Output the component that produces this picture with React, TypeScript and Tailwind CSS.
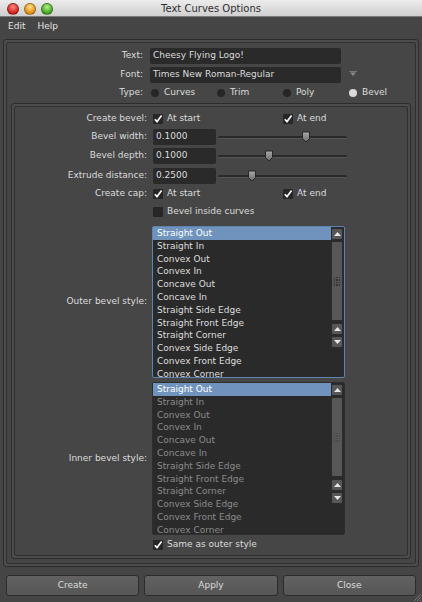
import React from 'react';

const styles = [
  'Straight Out',
  'Straight In',
  'Convex Out',
  'Convex In',
  'Concave Out',
  'Concave In',
  'Straight Side Edge',
  'Straight Front Edge',
  'Straight Corner',
  'Convex Side Edge',
  'Convex Front Edge',
  'Convex Corner',
];

const Check: React.FC<{ on?: boolean }> = ({ on = true }) => (
  <span className="w-[10px] h-[10px] shrink-0 bg-[#262626] rounded-[1px] flex items-center justify-center">
    {on && (
      <svg width="10" height="10" viewBox="0 0 10 10">
        <path d="M1.8 5.2 L4 7.6 L8.6 1.6" stroke="#f4f4f4" strokeWidth="1.7" fill="none" />
      </svg>
    )}
  </span>
);

const Radio: React.FC<{ label: string; on?: boolean }> = ({ label, on }) => (
  <div className="w-[66px] flex items-center">
    <span className={`w-[8px] h-[8px] rounded-full ${on ? 'bg-[#d8d8d8]' : 'bg-[#262626]'}`} />
    <span className="ml-[5px]">{label}</span>
  </div>
);

const Thumb: React.FC<{ pos: number }> = ({ pos }) => (
  <svg className="absolute top-[2px]" style={{ left: pos - 5 }} width="10" height="12" viewBox="0 0 10 12">
    <defs>
      <linearGradient id="tg" x1="0" y1="0" x2="0" y2="1">
        <stop offset="0" stopColor="#a8a8a8" />
        <stop offset="1" stopColor="#6c6c6c" />
      </linearGradient>
    </defs>
    <path d="M1.5 1 H8.5 V7.5 L5 11 L1.5 7.5 Z" fill="url(#tg)" stroke="#262626" strokeWidth="1" />
  </svg>
);

const Slider: React.FC<{ pos: number }> = ({ pos }) => (
  <div className="relative ml-[2px] w-[129px] h-[16px] flex items-center">
    <div className="w-full h-[3px] rounded-full bg-[#2a2a2a] border-b border-[#555]" />
    <Thumb pos={pos} />
  </div>
);

const Arrow: React.FC<{ up?: boolean }> = ({ up }) => (
  <div className="h-[12px] bg-[#575757] border border-[#2c2c2c] rounded-[2px] flex items-center justify-center">
    <svg width="7" height="4" viewBox="0 0 7 4">
      <path d={up ? 'M0 4 L3.5 0 L7 4 Z' : 'M0 0 L3.5 4 L7 0 Z'} fill="#e6e6e6" />
    </svg>
  </div>
);

const ScrollBar: React.FC<{ dim?: boolean }> = ({ dim }) => (
  <div className="w-[12px] flex flex-col gap-[1px] my-[1px]">
    <Arrow up />
    <div className="h-[80px] bg-[#575757] border border-[#2c2c2c] rounded-[2px] flex items-center justify-center">
      <div className="grid grid-cols-3 gap-[1px]">
        {[...Array(12)].map((_, i) => (
          <span key={i} className={`w-[1.5px] h-[1.5px] ${dim ? 'bg-[#4a4a4a]' : 'bg-[#333]'}`} />
        ))}
      </div>
    </div>
    <div className="flex-1 bg-[#343434]" />
    <Arrow up />
    <Arrow />
  </div>
);

const List: React.FC<{ focus?: boolean; dim?: boolean; h: string }> = ({ focus, dim, h }) => (
  <div
    className={`ml-[5px] w-[193px] ${h} flex bg-[#2a2a2a] border rounded-[2px] ${
      focus ? 'border-[#5d84b0]' : 'border-[#2e2e2e]'
    }`}
  >
    <div className="flex-1 overflow-hidden">
      {styles.map((s, i) => (
        <div
          key={s}
          className={`h-[12.8px] leading-[12.8px] pl-[4px] whitespace-nowrap ${
            i === 0 ? 'bg-[#6f93bd] text-white' : dim ? 'text-[#8a8a8a]' : 'text-[#dedede]'
          }`}
        >
          {s}
        </div>
      ))}
    </div>
    <div className="mr-[1px]">
      <ScrollBar dim={dim} />
    </div>
  </div>
);

const Groove: React.FC<{ className?: string; inner?: string; children: React.ReactNode }> = ({
  className = '',
  inner = '',
  children,
}) => (
  <div className={`border border-[#2c2c2c] rounded-[3px] p-[2px] bg-[#4c4c4c] ${className}`}>
    <div className={`border border-[#303030] rounded-[2px] bg-[#464646] ${inner}`}>{children}</div>
  </div>
);

const Light: React.FC<{ c1: string; c2: string }> = ({ c1, c2 }) => (
  <span
    className="w-[12px] h-[12px] rounded-full border border-[#00000055]"
    style={{ background: `radial-gradient(circle at 50% 30%, ${c1} 0%, ${c2} 70%)` }}
  />
);

const App: React.FC = () => {
  return (
    <div className="w-[422px] h-[602px] bg-[#454545] flex flex-col overflow-hidden text-[9px] text-[#dcdcdc] font-['DejaVu_Sans',sans-serif] relative">
      {/* Title bar */}
      <div className="h-[17px] shrink-0 relative flex items-center justify-center bg-gradient-to-b from-[#ececec] to-[#cfcfcf] border-b border-[#7a7a7a]">
        <div className="absolute left-[7px] top-[3px] flex gap-[5px]">
          <Light c1="#ff8a80" c2="#d0211c" />
          <Light c1="#ffe08a" c2="#e08e12" />
          <Light c1="#b6f08a" c2="#3fa422" />
        </div>
        <span className="text-[10px] text-[#2e2e2e]">Text Curves Options</span>
      </div>

      {/* Menu */}
      <div className="h-[20px] shrink-0 flex items-center gap-[12px] pl-[8px] text-[#e4e4e4]">
        <span>Edit</span>
        <span>Help</span>
      </div>

      <div className="px-[3px] mt-[2px]">
        <Groove inner="px-[0px] pt-[5px] pb-[4px]">
          <div className="flex items-center h-[16px]">
            <span className="w-[136px] text-right">Text:</span>
            <div className="ml-[7px] w-[191px] h-[16px] bg-[#2a2a2a] rounded-[2px] pl-[3px] flex items-center">
              Cheesy Flying Logo!
            </div>
          </div>
          <div className="flex items-center h-[16px] mt-[3px]">
            <span className="w-[136px] text-right">Font:</span>
            <div className="ml-[7px] w-[191px] h-[16px] bg-[#2a2a2a] rounded-[2px] pl-[3px] flex items-center">
              Times New Roman-Regular
            </div>
            <svg className="ml-[8px] mt-[-2px]" width="8" height="6" viewBox="0 0 8 6">
              <path d="M0 0.5 H8" stroke="#777" strokeWidth="1" />
              <path d="M1 1.5 L4 5 L7 1.5 Z" fill="#8a8a8a" />
            </svg>
          </div>
          <div className="flex items-center h-[14px] mt-[3px]">
            <span className="w-[136px] text-right">Type:</span>
            <div className="ml-[8px] flex">
              <Radio label="Curves" />
              <Radio label="Trim" />
              <Radio label="Poly" />
              <Radio label="Bevel" on />
            </div>
          </div>

          <Groove className="mx-[4px] mt-[3px]" inner="pt-[5px] pb-[3px]">
            <div className="flex items-center h-[14px]">
              <span className="w-[132px] text-right">Create bevel:</span>
              <div className="ml-[6px] w-[130px] flex items-center gap-[4px]">
                <Check />
                <span>At start</span>
              </div>
              <div className="flex items-center gap-[4px]">
                <Check />
                <span>At end</span>
              </div>
            </div>
            {[
              { label: 'Bevel width:', value: '0.1000', pos: 88, mt: 'mt-[3px]' },
              { label: 'Bevel depth:', value: '0.1000', pos: 51, mt: 'mt-[3px]' },
              { label: 'Extrude distance:', value: '0.2500', pos: 34, mt: 'mt-[4px]' },
            ].map((r) => (
              <div key={r.label} className={`flex items-center h-[16px] ${r.mt}`}>
                <span className="w-[132px] text-right">{r.label}</span>
                <div className="ml-[6px] w-[63px] h-[16px] bg-[#2a2a2a] rounded-[2px] pl-[3px] flex items-center">
                  {r.value}
                </div>
                <Slider pos={r.pos} />
              </div>
            ))}
            <div className="flex items-center h-[14px] mt-[3px]">
              <span className="w-[132px] text-right">Create cap:</span>
              <div className="ml-[6px] w-[130px] flex items-center gap-[4px]">
                <Check />
                <span>At start</span>
              </div>
              <div className="flex items-center gap-[4px]">
                <Check />
                <span>At end</span>
              </div>
            </div>
            <div className="flex items-center h-[14px] mt-[4px]">
              <span className="w-[132px]" />
              <div className="ml-[6px] flex items-center gap-[4px]">
                <Check on={false} />
                <span>Bevel inside curves</span>
              </div>
            </div>

            <div className="flex items-center mt-[7px]">
              <span className="w-[132px] text-right">Outer bevel style:</span>
              <List focus h="h-[152px]" />
            </div>
            <div className="flex items-center mt-[4px]">
              <span className="w-[132px] text-right">Inner bevel style:</span>
              <List dim h="h-[153px]" />
            </div>
            <div className="flex items-center h-[14px] mt-[3px]">
              <span className="w-[132px]" />
              <div className="ml-[6px] flex items-center gap-[4px]">
                <Check />
                <span>Same as outer style</span>
              </div>
            </div>
          </Groove>
        </Groove>
      </div>

      {/* Buttons */}
      <div className="flex gap-[5px] px-[6px] mt-[8px]">
        {['Create', 'Apply', 'Close'].map((b) => (
          <button
            key={b}
            className="flex-1 h-[21px] rounded-[3px] border border-[#2c2c2c] bg-gradient-to-b from-[#626262] to-[#565656] text-[#dcdcdc] text-[9px]"
          >
            {b}
          </button>
        ))}
      </div>

      {/* Resize grip */}
      <svg className="absolute right-[1px] bottom-[1px]" width="8" height="8" viewBox="0 0 8 8">
        <path d="M8 1 L1 8 M8 4 L4 8 M8 7 L7 8" stroke="#777" strokeWidth="1" />
      </svg>
    </div>
  );
};

export default App;
